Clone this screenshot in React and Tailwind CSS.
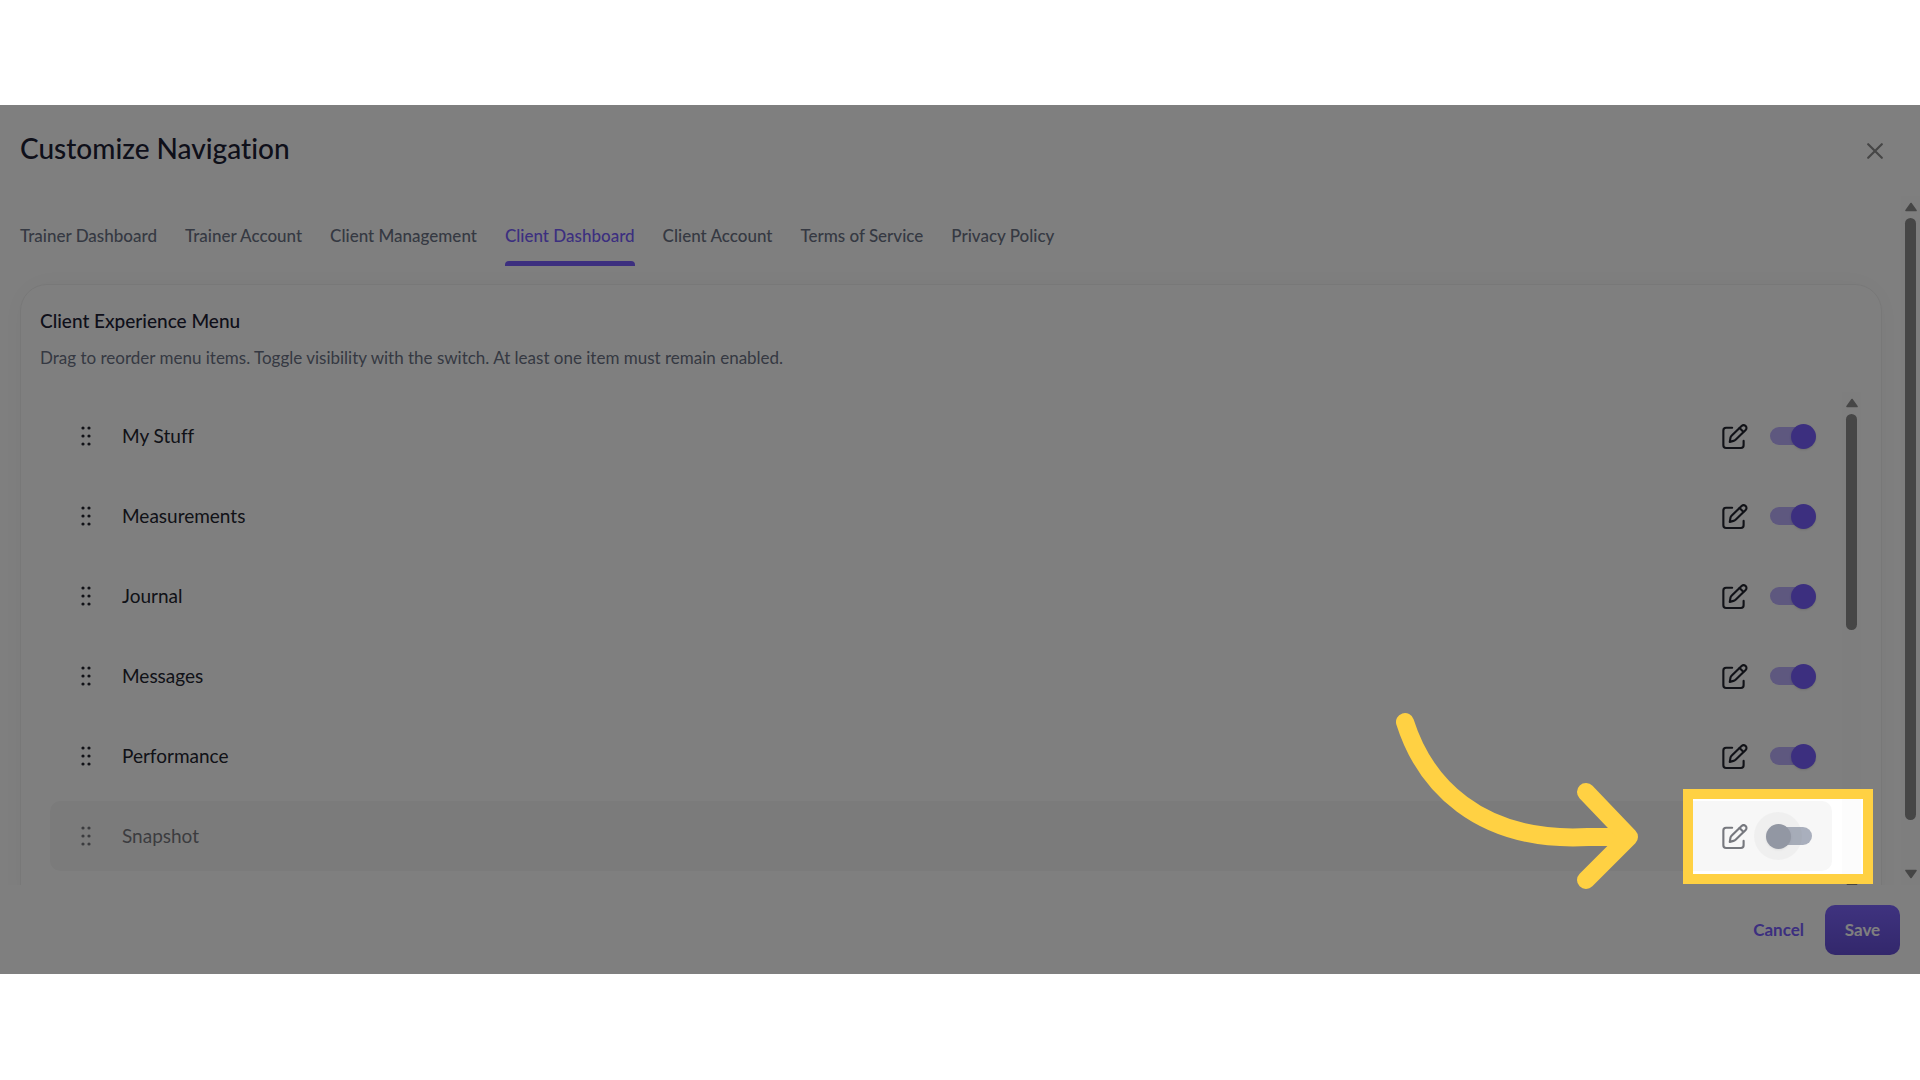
import React, { useState } from "react";
import clsx from "clsx";

const tabs = [
  "Trainer Dashboard",
  "Trainer Account",
  "Client Management",
  "Client Dashboard",
  "Client Account",
  "Terms of Service",
  "Privacy Policy",
];

const initialItems = [
  { id: "my-stuff", label: "My Stuff", enabled: true },
  { id: "measurements", label: "Measurements", enabled: true },
  { id: "journal", label: "Journal", enabled: true },
  { id: "messages", label: "Messages", enabled: true },
  { id: "performance", label: "Performance", enabled: true },
  { id: "snapshot", label: "Snapshot", enabled: false },
];

function DragIcon() {
  return (
    <svg width="10" height="20" viewBox="0 0 10 20" fill="currentColor">
      {[2, 10, 18].map((y) => (
        <g key={y}>
          <circle cx="2" cy={y} r="1.6" />
          <circle cx="8" cy={y} r="1.6" />
        </g>
      ))}
    </svg>
  );
}

function EditIcon() {
  return (
    <svg
      width="27"
      height="27"
      viewBox="0 0 80 80"
      fill="none"
      stroke="currentColor"
      strokeWidth="6.3"
      strokeLinecap="round"
      strokeLinejoin="round"
    >
      <path d="M33 14H15q-8 0-8 8V66q0 8 8 8H59q8 0 8-8V53" />
      <path d="M26 56L28 44q1-4 4-7L61 9a7.8 7.8 0 0 1 12 12L44 49q-3 3-7 4Z" />
      <path d="M55 15L66 26" />
    </svg>
  );
}

function ScrollArrow({ down }) {
  return (
    <svg
      width="12"
      height="10"
      viewBox="0 0 12 10"
      className={clsx("shrink-0", down && "rotate-180")}
    >
      <path
        d="M6 1.5L11 8.5H1Z"
        fill="#8c8c8c"
        stroke="#8c8c8c"
        strokeWidth="1.6"
        strokeLinejoin="round"
      />
    </svg>
  );
}

function Scrollbar({ thumb }) {
  return (
    <div
      aria-hidden="true"
      className="flex w-[19px] shrink-0 flex-col items-center justify-between bg-[#fcfcfc] py-1.5"
    >
      <div className="flex flex-col items-center gap-1.5">
        <ScrollArrow />
        <div className={clsx("w-[11px] rounded-full bg-[#8c8c8c]", thumb)} />
      </div>
      <ScrollArrow down />
    </div>
  );
}

function Toggle({ id, checked, onChange }) {
  return (
    <span className="relative flex h-12 w-[58px] items-center justify-center">
      <input
        id={id}
        type="checkbox"
        role="switch"
        checked={checked}
        onChange={onChange}
        className="h-[18px] w-[42px] cursor-pointer appearance-none rounded-full bg-[#6b758e] checked:bg-[#bcb0ff]"
      />
      <span
        className={clsx(
          "pointer-events-none absolute top-0 flex h-12 w-12 items-center justify-center rounded-full",
          checked ? "right-[-7px]" : "left-[-8px] bg-black/5"
        )}
      >
        <span
          className={clsx(
            "h-[25px] w-[25px] rounded-full shadow-sm",
            checked ? "bg-[#785eff]" : "bg-[#40495f]"
          )}
        />
      </span>
    </span>
  );
}

function MenuRow({ item, onToggle }) {
  return (
    <li
      className={clsx(
        "flex h-[70px] items-center rounded-[10px] pl-[31px] pr-3",
        !item.enabled && "bg-[#f7f7f7]"
      )}
    >
      <div
        className={clsx(
          "flex flex-1 items-center text-[#22242f]",
          !item.enabled && "opacity-60"
        )}
      >
        <button type="button" aria-label="Reorder" className="cursor-grab">
          <DragIcon />
        </button>
        <label htmlFor={item.id} className="ml-[31px] flex-1 text-[19px]">
          {item.label}
        </label>
        <button
          type="button"
          aria-label={`Edit ${item.label}`}
          className="mr-3.5"
        >
          <EditIcon />
        </button>
      </div>
      <div className={clsx(!item.enabled && "opacity-55")}>
        <Toggle id={item.id} checked={item.enabled} onChange={onToggle} />
      </div>
    </li>
  );
}

export default function App() {
  const [activeTab, setActiveTab] = useState("Client Dashboard");
  const [items, setItems] = useState(initialItems);

  const toggleItem = (id) =>
    setItems((prev) =>
      prev.map((i) => (i.id === id ? { ...i, enabled: !i.enabled } : i))
    );

  return (
    <div className="min-h-screen bg-white pt-[105px] font-['Lato',sans-serif] [font-variant-ligatures:none]">
      <main className="relative overflow-hidden bg-white">
        <header className="flex h-[91px] items-center justify-between pl-5 pr-[37px]">
          <h1 className="pb-1.5 text-[28px] font-medium leading-9 text-[#1c2034]">
            Customize Navigation
          </h1>
          <button type="button" aria-label="Close" className="text-[#8c8c8c]">
            <svg
              width="16"
              height="16"
              viewBox="0 0 16 16"
              stroke="currentColor"
              strokeWidth="2.2"
              strokeLinecap="round"
            >
              <path d="M1.2 1.2L14.8 14.8M14.8 1.2L1.2 14.8" />
            </svg>
          </button>
        </header>

        <div className="flex h-[689px] overflow-hidden">
          <div className="min-w-0 flex-1 pl-5 pr-[19px]">
            <nav className="flex h-[70px] gap-7">
              {tabs.map((tab) => (
                <button
                  key={tab}
                  type="button"
                  onClick={() => setActiveTab(tab)}
                  className={clsx(
                    "flex flex-col justify-between pt-7 text-[17px] font-medium leading-6",
                    tab === activeTab ? "text-[#785eff]" : "text-[#6b7285]"
                  )}
                >
                  {tab}
                  <span
                    className={clsx(
                      "h-[5px] w-full rounded-t",
                      tab === activeTab && "bg-[#785eff]"
                    )}
                  />
                </button>
              ))}
            </nav>

            <section className="mt-[18px] rounded-[27px] border border-[#f0f0f0] pl-[19px] pr-5 pb-5 pt-6 shadow-[0_0_30px_rgba(0,0,0,0.04)]">
              <h2 className="text-[19px] font-medium leading-6 text-[#1c2034]">
                Client Experience Menu
              </h2>
              <p className="mt-[13px] text-[17px] leading-6 text-[#6b7285]">
                Drag to reorder menu items. Toggle visibility with the switch.
                At least one item must remain enabled.
              </p>
              <div className="mt-[22px] flex h-[506px]">
                <ul className="flex flex-1 flex-col gap-2.5 px-2.5 pt-[9px]">
                  {items.map((item) => (
                    <MenuRow
                      key={item.id}
                      item={item}
                      onToggle={() => toggleItem(item.id)}
                    />
                  ))}
                </ul>
                <Scrollbar thumb="h-[216px]" />
              </div>
            </section>
          </div>
          <Scrollbar thumb="h-[602px]" />
        </div>

        <footer className="flex h-[89px] items-center justify-end gap-[21px] pr-5">
          <button
            type="button"
            className="text-[17px] font-bold text-[#785eff]"
          >
            Cancel
          </button>
          <button
            type="button"
            className="h-[50px] w-[75px] rounded-[10px] bg-linear-to-b from-[#7e66ff] to-[#6650d8] text-[17px] font-bold text-white"
          >
            Save
          </button>
        </footer>

        {/* spotlight on the disabled item, the shadow dims everything else */}
        <div className="pointer-events-none absolute right-[47px] top-[684px] h-[95px] w-[190px] border-10 border-[#ffd143] shadow-[0_0_0_2000px_rgba(0,0,0,0.5)]" />
        <svg
          width="246"
          height="178"
          viewBox="0 0 246 178"
          fill="none"
          stroke="#ffd143"
          strokeWidth="18"
          strokeLinecap="round"
          strokeLinejoin="round"
          className="pointer-events-none absolute right-[279px] top-[607px]"
        >
          <path d="M10 10C29 70 82 131 193 125L233 125" />
          <path d="M191 80L234 125L191 168" />
        </svg>
      </main>
    </div>
  );
}
